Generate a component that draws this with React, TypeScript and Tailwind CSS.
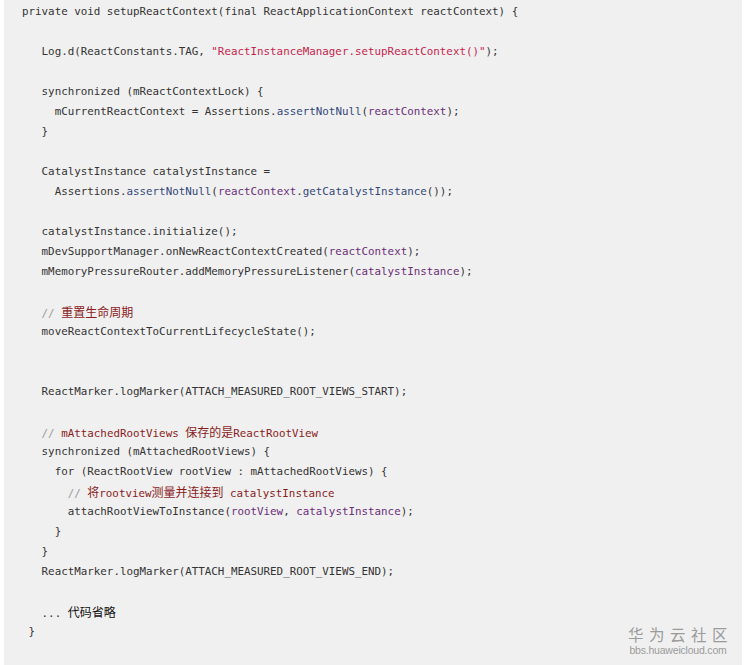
import React from "react";

type Seg = [string, string?];

const C: Record<string, string> = {
  s: "text-[#c7254e]",
  m: "text-[#34487a]",
  v: "text-[#6b2e78]",
  c: "text-[#8b1c1c]",
  g: "text-[#9a9a9a]",
  k: "text-[#111111]",
};

const isCJK = (ch: string) => /[\u3000-\u9fff]/.test(ch);

function renderText(text: string, cls: string, key: number) {
  const parts: { t: string; cjk: boolean }[] = [];
  for (const ch of text) {
    const cj = isCJK(ch);
    const last = parts[parts.length - 1];
    if (last && last.cjk === cj) last.t += ch;
    else parts.push({ t: ch, cjk: cj });
  }
  return (
    <span key={key} className={cls}>
      {parts.map((p, i) =>
        p.cjk ? (
          <span
            key={i}
            className="text-[12px] font-['Noto_Sans_CJK_SC',sans-serif]"
          >
            {p.t}
          </span>
        ) : (
          <span key={i}>{p.t}</span>
        )
      )}
    </span>
  );
}

const lines: Seg[][] = [
  [["private void setupReactContext(final ReactApplicationContext reactContext) {"]],
  [],
  [["   Log.d(ReactConstants.TAG, "], ['"ReactInstanceManager.setupReactContext()"', "s"], [");"]],
  [],
  [["   synchronized (mReactContextLock) {"]],
  [["     mCurrentReactContext = Assertions."], ["assertNotNull", "m"], ["("], ["reactContext", "v"], [");"]],
  [["   }"]],
  [],
  [["   CatalystInstance catalystInstance ="]],
  [["     Assertions."], ["assertNotNull", "m"], ["("], ["reactContext", "v"], ["."], ["getCatalystInstance", "m"], ["());"]],
  [],
  [["   catalystInstance.initialize();"]],
  [["   mDevSupportManager.onNewReactContextCreated("], ["reactContext", "v"], [");"]],
  [["   mMemoryPressureRouter.addMemoryPressureListener("], ["catalystInstance", "v"], [");"]],
  [],
  [["   "], ["// ", "g"], ["重置生命周期", "c"]],
  [["   moveReactContextToCurrentLifecycleState();"]],
  [],
  [],
  [["   ReactMarker.logMarker(ATTACH_MEASURED_ROOT_VIEWS_START);"]],
  [],
  [["   "], ["// ", "g"], ["mAttachedRootViews 保存的是ReactRootView", "c"]],
  [["   synchronized (mAttachedRootViews) {"]],
  [["     for (ReactRootView rootView : mAttachedRootViews) {"]],
  [["       "], ["// ", "g"], ["将rootview测量并连接到 catalystInstance", "c"]],
  [["       attachRootViewToInstance("], ["rootView", "v"], [", "], ["catalystInstance", "v"], [");"]],
  [["     }"]],
  [["   }"]],
  [["   ReactMarker.logMarker(ATTACH_MEASURED_ROOT_VIEWS_END);"]],
  [],
  [["   ... "], ["代码省略", "k"]],
  [[" }"]],
];

export default function App() {
  return (
    <div className="w-[746px] h-[665px] bg-white pl-[4px] pr-[4px] overflow-hidden">
      <div className="relative h-full bg-[#f0f0f0] pl-[18px] pt-[2px] text-[#333333] text-[10.85px] font-['DejaVu_Sans_Mono',monospace]">
        {lines.map((segs, i) => (
          <div key={i} className="h-[20px] leading-[20px] whitespace-pre">
            {segs.length === 0
              ? "\u00a0"
              : segs.map((s, j) => renderText(s[0], s[1] ? C[s[1]] : "", j))}
          </div>
        ))}
        <div className="absolute right-[9px] bottom-[9px] flex flex-col items-center gap-[3px] text-[#9b9b9b]">
          <div className="text-[15.5px] leading-[16px] tracking-[5.5px] font-['Noto_Sans_CJK_SC',sans-serif] pl-[5px]">
            华为云社区
          </div>
          <div className="text-[10.5px] leading-[11px] font-['Liberation_Sans',sans-serif] tracking-[-0.2px]">
            bbs.huaweicloud.com
          </div>
        </div>
      </div>
    </div>
  );
}
